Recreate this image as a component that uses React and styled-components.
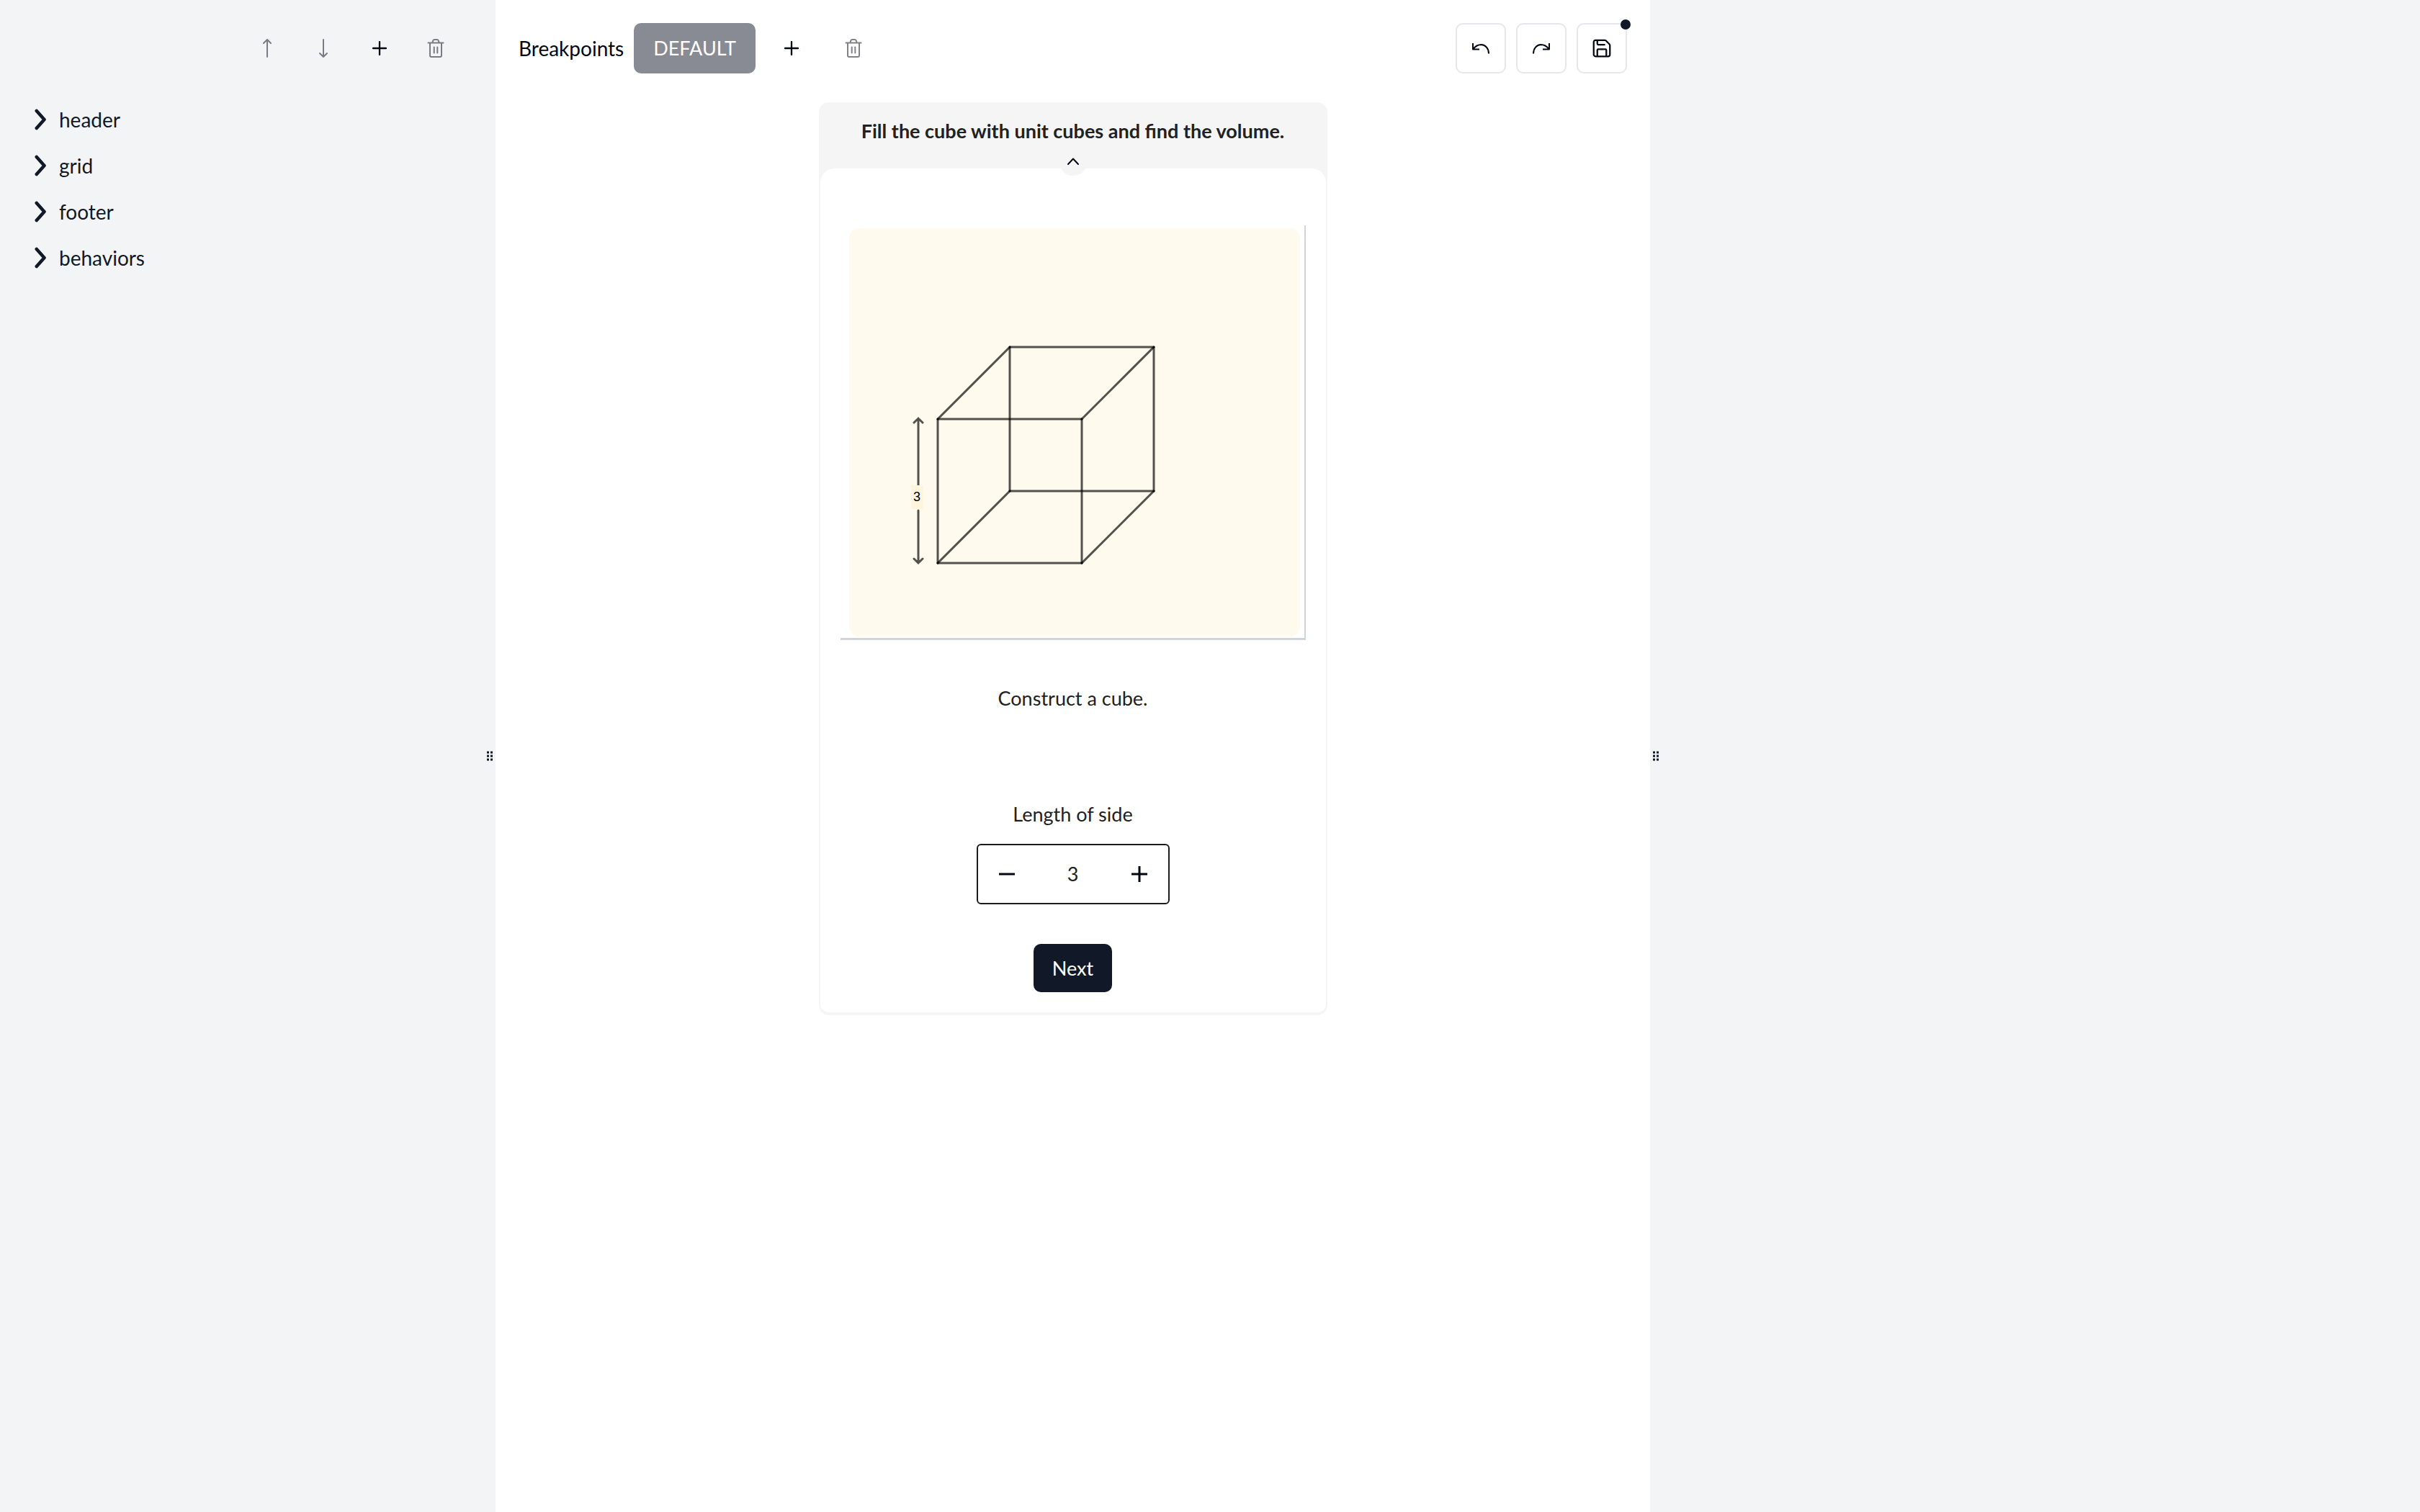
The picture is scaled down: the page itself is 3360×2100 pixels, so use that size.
import React, { useState } from "react";
import styled, { createGlobalStyle } from "styled-components";

const GlobalStyle = createGlobalStyle`
  *, *::before, *::after { box-sizing: border-box; }
  body { margin: 0; background: #fff; }
  body, button, input { font: 400 28px/42px Lato, "Open Sans", sans-serif; color: #030712; }
`;

const Shell = styled.div`
  display: flex;
  min-height: 100vh;
`;

const Pane = styled.div`
  flex: ${(p) => p.$share} 1 0;
  min-width: 0;
  position: relative;
  background: ${(p) => (p.$muted ? "#f2f4f6" : "#fff")};
`;

const Handle = styled.div`
  position: absolute;
  top: 50%;
  ${(p) => p.$side}: 4px;
  transform: translateY(-50%);
  display: grid;
  grid-template-columns: 3px 3px;
  gap: 2px;
`;

const Dot = styled.span`
  height: 3px;
  background: #111827;
`;

const SideTools = styled.div`
  display: flex;
  justify-content: flex-end;
  gap: 14px;
  padding: 32px 51px 0 0;
`;

const GhostButton = styled.button`
  display: grid;
  place-items: center;
  width: ${(p) => p.$width}px;
  height: 70px;
  padding: 0;
  border: 0;
  background: none;
  opacity: ${(p) => (p.disabled ? 0.5 : 1)};
`;

const Tree = styled.ul`
  margin: 0;
  padding: 32px 40px;
  list-style: none;
`;

const TreeButton = styled.button`
  display: flex;
  align-items: center;
  gap: 16px;
  height: 64px;
  padding: 0 0 0 8px;
  border: 0;
  background: none;
  color: #111827;
`;

const Toolbar = styled.div`
  display: flex;
  justify-content: space-between;
  padding: 32px;
`;

const ToolGroup = styled.div`
  display: flex;
  align-items: center;
  gap: 14px;
`;

const BreakpointChip = styled.button`
  height: 70px;
  padding: 0 27px;
  border: 0;
  border-radius: 10px;
  background: #888b93;
  color: #fff;
  font-size: 27px;
`;

const OutlineButton = styled.button`
  position: relative;
  display: grid;
  place-items: center;
  width: 70px;
  height: 70px;
  padding: 0;
  border: 2px solid #e5e7eb;
  border-radius: 10px;
  background: #fff;
`;

const UnsavedDot = styled.span`
  position: absolute;
  top: -7px;
  right: -7px;
  width: 14px;
  height: 14px;
  border-radius: 50%;
  background: #111827;
`;

const Card = styled.section`
  width: 706px;
  margin: 8px auto 0;
  padding: 0 2px 4px;
  border-radius: 14px;
  background: #f5f5f5;
`;

const CardHeader = styled.header`
  display: flex;
  flex-direction: column;
  align-items: center;
  padding-top: 19px;
`;

const Title = styled.h1`
  margin: 0;
  font-size: 27px;
  line-height: 42px;
  font-weight: 700;
  color: #212121;
`;

const CollapseButton = styled.button`
  position: relative;
  display: grid;
  place-items: center;
  width: 40px;
  height: 40px;
  margin: 1px 0 -10px;
  padding: 0;
  border: 0;
  border-radius: 50%;
  background: #f5f5f5;
`;

const CardBody = styled.div`
  display: flex;
  flex-direction: column;
  align-items: center;
  padding: 79px 28px 28px;
  border-radius: 20px 20px 12px 12px;
  background: #fff;
`;

const Figure = styled.div`
  align-self: stretch;
  padding: 4px 6px 2px 12px;
  border: solid #d1d5db;
  border-width: 0 2px 3px 0;
`;

const Drawing = styled.svg`
  display: block;
  width: 100%;
  border-radius: 14px;
  background: #fefaed;
`;

const Prompt = styled.p`
  margin: 60px 0 119px;
  font-size: 27px;
  color: #212121;
`;

const FieldLabel = styled.label`
  font-size: 27px;
  color: #212121;
`;

const Stepper = styled.div`
  display: flex;
  align-items: stretch;
  width: 268px;
  height: 84px;
  margin: 20px 0 55px;
  border: 2px solid #1c1c1c;
  border-radius: 6px;
`;

const StepButton = styled.button`
  display: grid;
  place-items: center;
  width: 80px;
  padding: 0;
  border: 0;
  background: none;
`;

const StepInput = styled.input`
  flex: 1;
  min-width: 0;
  padding: 0;
  border: 0;
  background: none;
  text-align: center;
  font-size: 27px;
  color: #212121;
`;

const NextButton = styled.button`
  height: 67px;
  padding: 0 26px;
  border: 0;
  border-radius: 10px;
  background: #111827;
  color: #fff;
  font-size: 27px;
`;

const Glyph = ({ w, h, box, d, stroke = 2, cap = "round" }) => (
  <svg width={w} height={h} viewBox={box || `0 0 ${w} ${h}`} fill="none" stroke="currentColor"
    strokeWidth={stroke} strokeLinecap={cap} strokeLinejoin="round" aria-hidden="true">
    <path d={d} />
  </svg>
);

const ArrowUp = () => <Glyph w={14} h={28} d="M7 26V2M2 7l5-5 5 5" />;
const ArrowDown = () => <Glyph w={14} h={28} d="M7 2v24M2 21l5 5 5-5" />;
const Plus = () => <Glyph w={20} h={20} d="M10 1v18M1 10h18" stroke={2.3} />;
const Trash = () => (
  <Glyph w={24} h={28} d="M1.500 6.500h21M4 6.500V24a2 2 0 0 0 2 2h12a2 2 0 0 0 2-2V6.500M7.500 6.500L8 4a2.500 2.500 0 0 1 2.300-2h3.400A2.500 2.500 0 0 1 16 4l.500 2.500M9.700 12.500v8M14.300 12.500v8" />
);
const Chevron = () => <Glyph w={18} h={30} d="M2.800 3l10.700 12L2.800 27" stroke={4.6} />;
const Caret = () => <Glyph w={18} h={12} d="M2 10l7-7.500 7 7.500" />;
const Undo = () => <Glyph w={26} h={18} cap="butt" d="M2 2v8.500h9M2.500 10C6 5.500 9.500 4 13.500 4 19.500 4.300 24 9 24 16.500" />;
const Redo = () => <Glyph w={26} h={18} cap="butt" d="M24 2v8.500h-9M23.500 10C20 5.500 16.500 4 12.500 4 6.500 4.300 2 9 2 16.500" />;
const Save = () => (
  <Glyph w={30} h={30} box="0 0 24 24" stroke={1.8}
    d="M15.200 3a2 2 0 0 1 1.400.600l3.800 3.800a2 2 0 0 1 .600 1.400V19a2 2 0 0 1-2 2H5a2 2 0 0 1-2-2V5a2 2 0 0 1 2-2zM17 21v-7a1 1 0 0 0-1-1H8a1 1 0 0 0-1 1v7M7 3v4a1 1 0 0 0 1 1h7" />
);

const ResizeHandle = ({ side }) => (
  <Handle $side={side}>
    {[0, 1, 2, 3, 4, 5].map((i) => <Dot key={i} />)}
  </Handle>
);

const CubeDrawing = ({ side }) => (
  <Drawing viewBox="0 0 626 567" role="img" aria-label={`Cube with side ${side}`}>
    <g fill="none" stroke="#000" strokeOpacity="0.68" strokeWidth="3" strokeLinecap="round">
      <path d="M223 165V365M423 165V365M123 265V465M323 265V465" />
      <path d="M223 165H423M223 365H423M123 265H323M123 465H323" />
      <path d="M123 265L223 165M323 265L423 165M123 465L223 365M323 465L423 365" />
      <path d="M96 264V357M96 392V465M90 270L96 264L102 270M90 459L96 465L102 459" />
    </g>
    <rect x="86" y="357" width="17" height="33" fill="#fff4dc" />
    <text x="94" y="379" textAnchor="middle" fontFamily="Liberation Sans, sans-serif" fontSize="18" fill="#000">{side}</text>
  </Drawing>
);

const sections = ["header", "grid", "footer", "behaviors"];

export default function App() {
  const [side, setSide] = useState(3);
  return (
    <>
      <GlobalStyle />
      <Shell>
        <Pane as="aside" $share={688} $muted>
          <SideTools>
            <GhostButton $width={64} disabled aria-label="Move up"><ArrowUp /></GhostButton>
            <GhostButton $width={64} disabled aria-label="Move down"><ArrowDown /></GhostButton>
            <GhostButton $width={64} aria-label="Add section"><Plus /></GhostButton>
            <GhostButton $width={64} disabled aria-label="Delete section"><Trash /></GhostButton>
          </SideTools>
          <Tree>
            {sections.map((name) => (
              <li key={name}>
                <TreeButton><Chevron />{name}</TreeButton>
              </li>
            ))}
          </Tree>
          <ResizeHandle side="right" />
        </Pane>

        <Pane as="main" $share={1603}>
          <Toolbar>
            <ToolGroup>
              <span>Breakpoints</span>
              <BreakpointChip>DEFAULT</BreakpointChip>
              <GhostButton $width={72} aria-label="Add breakpoint"><Plus /></GhostButton>
              <GhostButton $width={72} disabled aria-label="Delete breakpoint"><Trash /></GhostButton>
            </ToolGroup>
            <ToolGroup>
              <OutlineButton aria-label="Undo"><Undo /></OutlineButton>
              <OutlineButton aria-label="Redo"><Redo /></OutlineButton>
              <OutlineButton aria-label="Save"><Save /><UnsavedDot /></OutlineButton>
            </ToolGroup>
          </Toolbar>

          <Card>
            <CardHeader>
              <Title>Fill the cube with unit cubes and find the volume.</Title>
              <CollapseButton aria-label="Collapse"><Caret /></CollapseButton>
            </CardHeader>
            <CardBody>
              <Figure><CubeDrawing side={side} /></Figure>
              <Prompt>Construct a cube.</Prompt>
              <FieldLabel htmlFor="side-length">Length of side</FieldLabel>
              <Stepper>
                <StepButton aria-label="Decrease" onClick={() => setSide(Math.max(1, side - 1))}>
                  <Glyph w={24} h={24} d="M1 12h22" stroke={3} cap="butt" />
                </StepButton>
                <StepInput id="side-length" value={side} readOnly />
                <StepButton aria-label="Increase" onClick={() => setSide(side + 1)}>
                  <Glyph w={24} h={24} d="M1 12h22M12 1v22" stroke={3} cap="butt" />
                </StepButton>
              </Stepper>
              <NextButton>Next</NextButton>
            </CardBody>
          </Card>
        </Pane>

        <Pane as="aside" $share={1069} $muted>
          <ResizeHandle side="left" />
        </Pane>
      </Shell>
    </>
  );
}
